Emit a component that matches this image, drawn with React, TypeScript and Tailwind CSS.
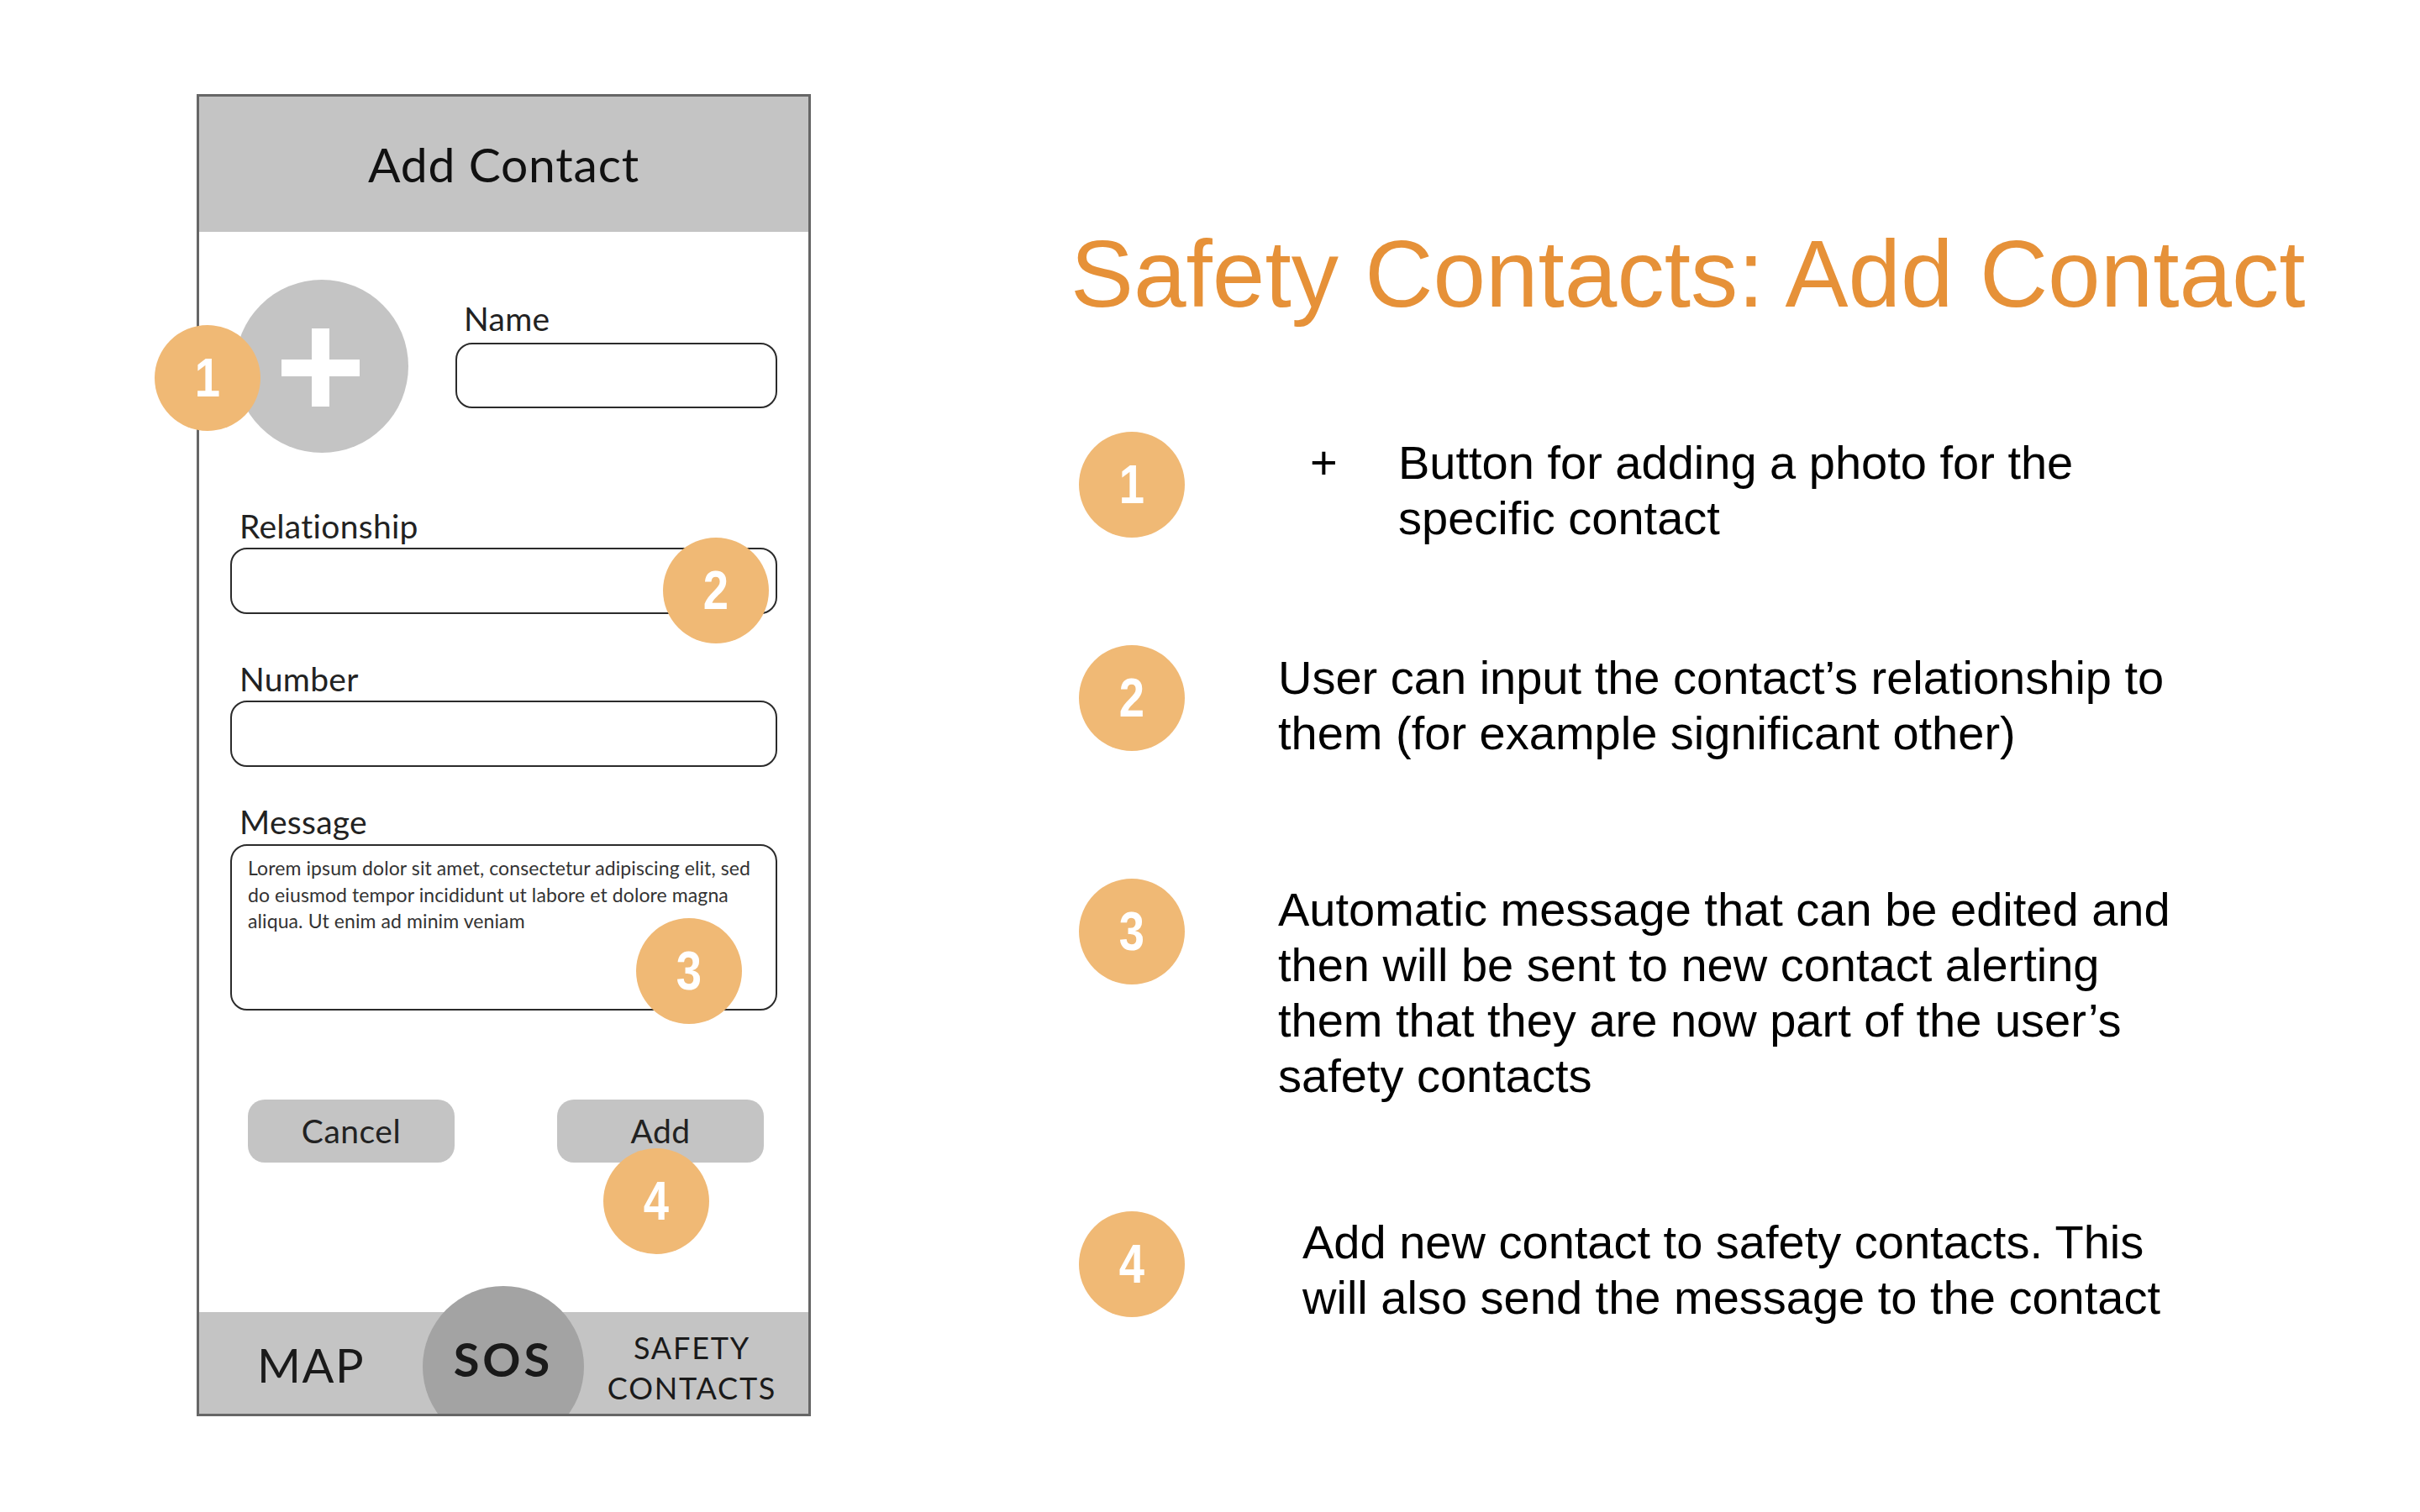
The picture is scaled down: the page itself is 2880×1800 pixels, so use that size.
import React from "react";

const Badge = ({ n, className = "" }: { n: string; className?: string }) => (
  <div
    className={
      "w-[126px] h-[126px] rounded-full bg-[#f0b975] flex items-center justify-center text-white font-bold text-[64px] leading-none font-['Liberation_Sans',Arial,sans-serif] " +
      className
    }
  >
    <span className="scale-x-[0.85] inline-block">{n}</span>
  </div>
);

const Label = ({ children, className = "" }: { children: React.ReactNode; className?: string }) => (
  <div className={"text-[39px] leading-none tracking-[0.3px] text-[#222] " + className}>{children}</div>
);

export default function App() {
  return (
    <div className="w-[2880px] h-[1800px] bg-white flex items-start overflow-hidden">
      {/* Phone mockup */}
      <div className="relative ml-[234px] mt-[112px] w-[731px] h-[1574px] border-[3px] border-[#666] shrink-0 font-['Lato',sans-serif]">
        <div className="w-full h-full overflow-hidden flex flex-col">
          {/* header */}
          <div className="h-[161px] bg-[#c4c4c4] flex items-center justify-center shrink-0">
            <span className="text-[57px] leading-none tracking-[0.8px] text-[#111]">Add Contact</span>
          </div>
          {/* body */}
          <div className="flex-1 flex flex-col px-[37px] bg-white">
            <div className="mt-[57px] flex items-start">
              <div className="ml-[6px] w-[206px] h-[206px] rounded-full bg-[#c4c4c4] flex items-center justify-center shrink-0">
                <svg width="93" height="93" viewBox="0 0 93 93" className="-ml-[4px] mt-[3px]">
                  <rect x="36" y="0" width="21" height="93" fill="#fff" />
                  <rect x="0" y="37" width="93" height="20" fill="#fff" />
                </svg>
              </div>
              <div className="ml-[56px] w-[383px] pt-[27px] flex flex-col">
                <Label className="ml-[10px]">Name</Label>
                <div className="mt-[9px] h-[78px] border-2 border-[#2b2b2b] rounded-[20px]" />
              </div>
            </div>

            <Label className="mt-[68px] ml-[11px]">Relationship</Label>
            <div className="mt-[6px] h-[79px] border-2 border-[#2b2b2b] rounded-[20px]" />

            <Label className="mt-[58px] ml-[11px]">Number</Label>
            <div className="mt-[6px] h-[79px] border-2 border-[#2b2b2b] rounded-[20px]" />

            <Label className="mt-[46px] ml-[11px]">Message</Label>
            <div className="mt-[7px] h-[198px] border-2 border-[#2b2b2b] rounded-[20px] pt-[11px] pl-[19px] text-[23px] leading-[31.5px] tracking-[0.1px] text-[#333] whitespace-nowrap">
              Lorem ipsum dolor sit amet, consectetur adipiscing elit, sed
              <br />
              do eiusmod tempor incididunt ut labore et dolore magna
              <br />
              aliqua. Ut enim ad minim veniam
            </div>

            <div className="mt-[106px] flex">
              <div className="ml-[21px] w-[246px] h-[75px] rounded-[20px] bg-[#c4c4c4] flex items-center justify-center text-[39px] leading-none tracking-[0.5px] text-[#222]">
                Cancel
              </div>
              <div className="ml-[122px] w-[246px] h-[75px] rounded-[20px] bg-[#c4c4c4] flex items-center justify-center text-[39px] leading-none tracking-[0.5px] text-[#222]">
                Add
              </div>
            </div>
          </div>
          {/* bottom nav */}
          <div className="h-[121px] bg-[#c4c4c4] flex shrink-0 relative">
            <div className="w-[266px] text-center pt-[35px] text-[56px] leading-none tracking-[1.5px] text-[#1a1a1a]">MAP</div>
            <div className="w-[192px] relative">
              <div className="absolute -top-[31px] left-0 w-[192px] h-[192px] rounded-full bg-[#a3a3a3]" />
              <div className="relative text-center pt-[28px] text-[56px] leading-none font-bold tracking-[4px] text-[#1a1a1a]">
                SOS
              </div>
            </div>
            <div className="flex-1 pr-[10px] pt-[18px] text-center text-[36px] leading-[48px] tracking-[1.8px] text-[#1a1a1a]">
              SAFETY
              <br />
              CONTACTS
            </div>
          </div>
        </div>

        {/* annotation badges */}
        <Badge n="1" className="absolute left-[-53px] top-[272px]" />
        <Badge n="2" className="absolute left-[552px] top-[525px]" />
        <Badge n="3" className="absolute left-[520px] top-[978px]" />
        <Badge n="4" className="absolute left-[481px] top-[1252px]" />
      </div>

      {/* Right column */}
      <div className="ml-[307px] mt-[270px] flex flex-col font-['Liberation_Sans',Arial,sans-serif] text-black">
        <div className="ml-[2px] text-[112.5px] leading-none text-[#e69138] whitespace-nowrap">Safety Contacts: Add Contact</div>

        <div className="mt-[131px] pl-[12px] flex items-start">
          <Badge n="1" className="shrink-0" />
          <div className="mt-[4px] ml-[149px] flex text-[56px] leading-[66px] whitespace-nowrap">
            <span className="w-[105px]">+</span>
            <span>
              Button for adding a photo for the
              <br />
              specific contact
            </span>
          </div>
        </div>

        <div className="mt-[118px] pl-[12px] flex items-start">
          <Badge n="2" className="shrink-0" />
          <div className="mt-[6px] ml-[111px] text-[56px] leading-[66px] whitespace-nowrap">
            User can input the contact’s relationship to
            <br />
            them (for example significant other)
          </div>
        </div>

        <div className="mt-[140px] pl-[12px] flex items-start">
          <Badge n="3" className="shrink-0" />
          <div className="mt-[4px] ml-[111px] text-[56px] leading-[66px] whitespace-nowrap">
            Automatic message that can be edited and
            <br />
            then will be sent to new contact alerting
            <br />
            them that they are now part of the user’s
            <br />
            safety contacts
          </div>
        </div>

        <div className="mt-[128px] pl-[12px] flex items-start">
          <Badge n="4" className="shrink-0" />
          <div className="mt-[4px] ml-[140px] text-[56px] leading-[66px] whitespace-nowrap">
            Add new contact to safety contacts. This
            <br />
            will also send the message to the contact
          </div>
        </div>
      </div>
    </div>
  );
}
